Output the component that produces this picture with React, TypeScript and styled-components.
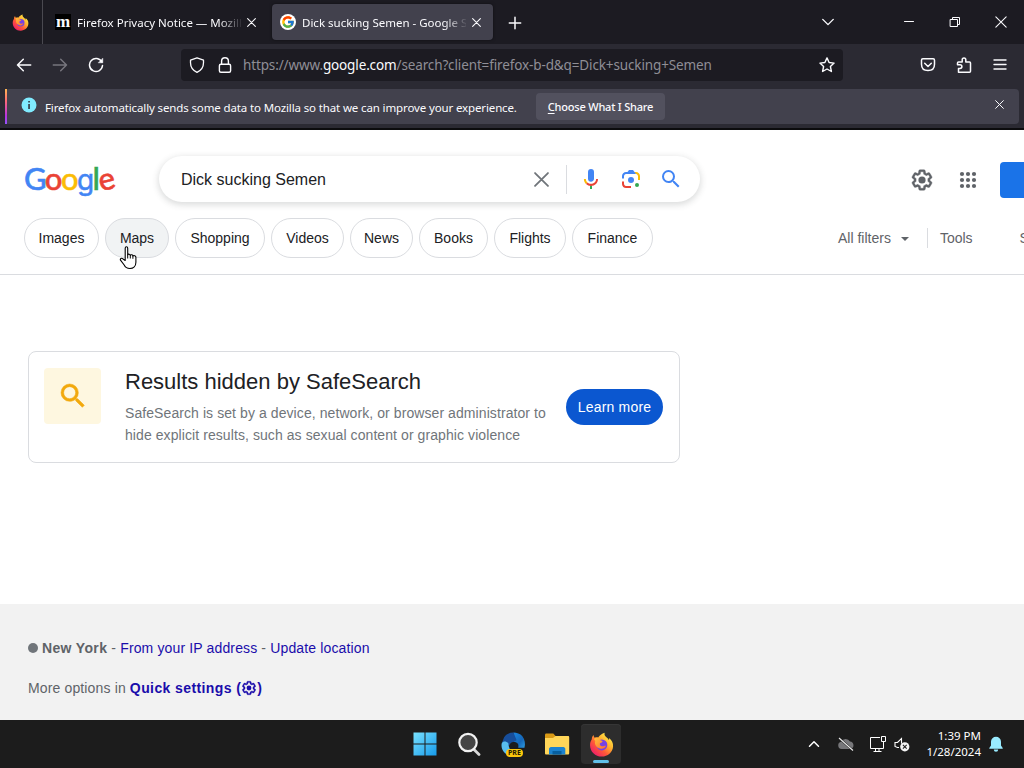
import { useState } from "react";
import type { ReactNode } from "react";
import styled, { createGlobalStyle, css } from "styled-components";
import { FcGoogle } from "react-icons/fc";

const GlobalStyle = createGlobalStyle`
  * { box-sizing: border-box; }
  html, body { margin: 0; padding: 0; overflow: hidden; }
  button { font: inherit; color: inherit; border: none; background: none; padding: 0; }
`;

const ui = `"Noto Sans", "Open Sans", sans-serif`;
const arial = `"Liberation Sans", Arial, sans-serif`;

/* ---------- icons ---------- */

const Stroke = ({
  size = 16,
  w = 1.4,
  color = "#fbfbfe",
  box = 16,
  children,
}: {
  size?: number;
  w?: number;
  color?: string;
  box?: number;
  children: ReactNode;
}) => (
  <svg
    width={size}
    height={size}
    viewBox={`0 0 ${box} ${box}`}
    fill="none"
    stroke={color}
    strokeWidth={w}
    strokeLinecap="round"
    strokeLinejoin="round"
  >
    {children}
  </svg>
);

const GEAR =
  "M13.85 22.25h-3.7c-.74 0-1.36-.54-1.45-1.27l-.27-1.89c-.27-.14-.53-.29-.79-.46l-1.8.72c-.7.26-1.47-.03-1.81-.65L2.2 15.53c-.35-.66-.2-1.44.36-1.88l1.53-1.19c-.01-.15-.02-.3-.02-.46 0-.15.01-.31.02-.46l-1.52-1.19c-.59-.45-.74-1.26-.37-1.88l1.85-3.19c.34-.62 1.11-.9 1.79-.63l1.81.73c.26-.17.52-.32.78-.46l.27-1.91c.09-.7.71-1.25 1.44-1.25h3.7c.74 0 1.36.54 1.45 1.27l.27 1.89c.27.14.53.29.79.46l1.8-.72c.71-.26 1.48.03 1.82.65l1.84 3.18c.36.66.2 1.44-.36 1.88l-1.52 1.19c.01.15.02.3.02.46s-.01.31-.02.46l1.52 1.19c.56.45.72 1.23.37 1.86l-1.86 3.22c-.34.62-1.11.9-1.8.63l-1.8-.72c-.26.17-.52.32-.78.46l-.27 1.91c-.1.68-.72 1.22-1.46 1.22zm-3.23-2h2.76l.37-2.55.53-.22c.44-.18.88-.44 1.34-.78l.45-.34 2.38.96 1.38-2.4-2.03-1.58.07-.56c.03-.26.06-.51.06-.78s-.03-.53-.06-.78l-.07-.56 2.03-1.58-1.39-2.4-2.39.96-.45-.35c-.42-.32-.87-.58-1.33-.77l-.52-.22-.37-2.55h-2.76l-.37 2.55-.53.21c-.44.19-.88.44-1.34.79l-.45.33-2.38-.95-1.39 2.39 2.03 1.58-.07.56a7 7 0 0 0-.06.79c0 .26.02.53.06.78l.07.56-2.03 1.58 1.38 2.4 2.39-.96.45.35c.43.33.86.58 1.33.77l.53.22.38 2.55z";

const Gear = ({ size, color }: { size: number; color: string }) => (
  <svg width={size} height={size} viewBox="0 0 24 24" fill={color}>
    <path d={GEAR} stroke={color} strokeWidth="0.4" />
    <circle cx="12" cy="12" r="3.6" />
  </svg>
);

const Magnifier = ({ size, color, bold = 0 }: { size: number; color: string; bold?: number }) => (
  <svg width={size} height={size} viewBox="0 0 24 24" fill={color} stroke={color} strokeWidth={bold}>
    <path d="M15.5 14h-.79l-.28-.27A6.47 6.47 0 0 0 16 9.5 6.5 6.5 0 1 0 9.5 16c1.61 0 3.09-.59 4.23-1.57l.27.28v.79l5 4.99L20.49 19l-4.99-5zm-6 0a4.5 4.5 0 1 1 0-9 4.5 4.5 0 0 1 0 9z" />
  </svg>
);

const FirefoxLogo = ({ size, id }: { size: number; id: string }) => (
  <svg width={size} height={size} viewBox="0 0 24 24">
    <defs>
      <linearGradient id={`${id}b`} x1="0.85" y1="0.1" x2="0.15" y2="0.9">
        <stop offset="0" stopColor="#fff04a" />
        <stop offset="0.35" stopColor="#ffb02e" />
        <stop offset="0.65" stopColor="#ff5838" />
        <stop offset="1" stopColor="#ee1f69" />
      </linearGradient>
      <linearGradient id={`${id}h`} x1="0" y1="0" x2="1" y2="1">
        <stop offset="0" stopColor="#ffc43a" />
        <stop offset="1" stopColor="#ff6a31" />
      </linearGradient>
    </defs>
    <path
      fill={`url(#${id}b)`}
      d="M15 .7c-.6 2.2.5 3.2 2 4.6 1 .9 1.8 1.7 2.2 2.7.2-.9.1-1.5-.1-2.2 2.9 2 4.2 5 4 8C22.7 19.500 18 23.500 12.200 23.500 6 23.500 1 18.800 1 12.600c0-2.500.8-4.300 1.700-5.700 0-1.500.5-2.900 1.600-4 .1 1 .5 1.800 1.100 2.500 1.200-.5 2.400-.5 3.400-.2C10.700 2.900 12.500 1.300 15 .7z"
    />
    <circle cx="12.300" cy="12.400" r="5.300" fill="#7542e5" />
    <path
      fill={`url(#${id}h)`}
      d="M4.700 6.600c1.500-1.300 3.500-1.400 5-.7l2.200.1c-.5.6-1.200 1-1.400 1.700l2.500.9c.1.900-.6 1.300-2.500 2.100-.4 1.400.4 2.700 2 3 1.600.2 2.500-.7 3.800-.5-.7 1.900-2.600 3.100-4.800 2.900-3.500-.3-5.800-2.900-5.800-5.700 0-.7.1-1.200.4-1.800z"
    />
  </svg>
);

const BackIcon = ({ dim }: { dim?: boolean }) => (
  <Stroke color={dim ? "#77767e" : "#fbfbfe"} w={1.5}>
    {dim ? <path d="M1.300 8h13.200M8.700 2.300 14.500 8l-5.800 5.700" /> : <path d="M14.700 8H1.500M7.300 2.300 1.500 8l5.800 5.700" />}
  </Stroke>
);

const Cross = ({ size, w = 1, color = "#fbfbfe" }: { size: number; w?: number; color?: string }) => (
  <Stroke size={size} box={10} w={w} color={color}>
    <path d="m.7.7 8.600 8.600M9.300.7.7 9.300" />
  </Stroke>
);

const MicIcon = () => (
  <svg width="24" height="24" viewBox="0 0 24 24">
    <path fill="#4285f4" d="M12 14.800c1.700 0 3-1.400 3-3V5.100a3 3 0 0 0-6 0v6.700c0 1.700 1.300 3 3 3z" />
    <path fill="#34a853" d="M11 18.200h2V22h-2z" />
    <path fill="#fbbc04" d="M7 16.900c-1.300-1.300-2.100-3-2.100-5h2c0 1.500.6 2.700 1.500 3.600z" />
    <path fill="#ea4335" d="M17.100 11.900c0 2.800-2.300 4.900-5.100 4.900-1.400 0-2.700-.5-3.600-1.400L7 16.900a7 7 0 0 0 5 2c3.900 0 7-3.100 7-7z" />
  </svg>
);

const LensIcon = () => (
  <svg width="24" height="24" viewBox="0 0 192 192">
    <circle fill="#34a853" cx="144.070" cy="144" r="16" />
    <circle fill="#4285f4" cx="96.070" cy="104" r="24" />
    <path fill="#ea4335" d="M24 135.200c0 18.110 14.690 32.800 32.800 32.800H96v-16l-40.100-.1c-8.800 0-15.900-8.190-15.900-17.900v-18H24v19.200z" />
    <path fill="#fbbc04" d="M168 72.800c0-18.110-14.690-32.800-32.800-32.800H116l20 16c8.800 0 16 8.290 16 18v30h16V72.800z" />
    <path fill="#4285f4" d="M112 24H80L68 40H56.800C38.690 40 24 54.690 24 72.800V92h16V74c0-9.710 7.200-18 16-18h80L124 40l-12-16z" />
  </svg>
);

/* ---------- browser chrome ---------- */

const Screen = styled.div`
  position: relative;
  width: 1024px;
  height: 768px;
  display: flex;
  flex-direction: column;
  overflow: hidden;
  background: #fff;
  font-family: ${arial};
  svg { display: block; flex: none; }
`;

const TabBar = styled.div`
  height: 44px;
  display: flex;
  align-items: center;
  background: #1c1b22;
  color: #fbfbfe;
  font: 11.5px/18px ${ui};
`;

const PinnedTab = styled.div`
  width: 43px;
  height: 44px;
  display: flex;
  align-items: center;
  padding-left: 12px;
  border-right: 1px solid #4a4950;
  margin-right: 4px;
`;

const Tab = styled.div<{ $active?: boolean }>`
  width: 221px;
  height: 36px;
  display: flex;
  align-items: center;
  padding: 0 12px 0 8px;
  margin-right: 4px;
  border-radius: 4px;
  ${(p) => p.$active && css`background: #42414d; box-shadow: 0 0 3px rgba(0, 0, 0, 0.5);`}
`;

const TabTitle = styled.span`
  width: 164px;
  margin: 1px 6px 0 6px;
  overflow: hidden;
  white-space: nowrap;
  mask-image: linear-gradient(to right, #000 142px, transparent 166px);
`;

const Favicon = styled.span`
  width: 16px;
  height: 16px;
  flex: none;
  display: grid;
  place-items: center;
  background: #000;
  font: bold 17px/10px "Liberation Serif", serif;
  padding-bottom: 1px;
`;

const RoundFavicon = styled.span`
  width: 16px;
  height: 16px;
  flex: none;
  display: grid;
  place-items: center;
  border-radius: 50%;
  background: #fff;
`;

const NewTab = styled.button`
  margin: 1px 0 0 11px;
`;

const WindowControls = styled.div`
  display: flex;
  align-items: center;
  margin-left: auto;
  padding-right: 17px;
  gap: 34px;
  & > :first-child { margin-right: 34px; }
`;

const NavBar = styled.div`
  height: 45px;
  display: flex;
  align-items: center;
  padding: 0 16px 4px;
  background: #2b2a33;
`;

const NavButtons = styled.div`
  display: flex;
  gap: 20px;
  width: 165px;
`;

const UrlBar = styled.div`
  width: 662px;
  height: 32px;
  display: flex;
  align-items: center;
  padding: 0 8px;
  border-radius: 4px;
  background: #1c1b22;
  gap: 12px;
`;

const Url = styled.span`
  flex: 1;
  margin: 1px 0 0 -2px;
  color: #8f8e96;
  font: 13.5px/20px ${ui};
  letter-spacing: -0.13px;
  white-space: nowrap;
  b { font-weight: 400; color: #fbfbfe; }
`;

const NavActions = styled.div`
  display: flex;
  align-items: center;
  gap: 20px;
  margin-left: auto;
`;

const NoticeWrap = styled.div`
  height: 41px;
  padding: 0 5px;
  background: #2b2a33;
  border-bottom: 2px solid #0c0c0e;
`;

const Notice = styled.div`
  height: 35px;
  display: flex;
  align-items: center;
  padding: 0 15px 0 14px;
  background: #42414d;
  border-left: 2px solid;
  border-image: linear-gradient(#ffbd4f, #ff6a75 35%, #b833e1 75%, #9059ff) 1;
  border-radius: 4px;
  color: #fbfbfe;
  font: 11.5px/18px ${ui};
  & > svg { margin-bottom: 4px; }
`;

const NoticeText = styled.span`
  margin: 2px 20px 0 8px;
  width: 471px;
  white-space: nowrap;
  letter-spacing: -0.13px;
`;

const NoticeButton = styled.button`
  width: 129px;
  height: 27px;
  margin-right: auto;
  border-radius: 4px;
  background: #52515e;
  font-size: 11px;
  font-weight: 500;
  letter-spacing: -0.2px;
  white-space: nowrap;
  u { text-underline-offset: 2px; }
`;

const BrowserChrome = () => (
  <>
    <TabBar>
      <PinnedTab>
        <FirefoxLogo size={17} id="pin" />
      </PinnedTab>
      <Tab>
        <Favicon>m</Favicon>
        <TabTitle>Firefox Privacy Notice — Mozilla</TabTitle>
        <Cross size={9} w={1.2} />
      </Tab>
      <Tab $active>
        <RoundFavicon>
          <FcGoogle size={14} />
        </RoundFavicon>
        <TabTitle>Dick sucking Semen - Google Search</TabTitle>
        <Cross size={9} w={1.2} />
      </Tab>
      <NewTab aria-label="New tab">
        <Stroke size={14} w={1.7}>
          <path d="M8 1.500v13M1.500 8h13" />
        </Stroke>
      </NewTab>
      <WindowControls>
        <Stroke size={14} w={1.6}>
          <path d="m2 5 6 6 6-6" />
        </Stroke>
        <Stroke size={12} box={12} w={1}>
          <path d="M1.500 5.500h9" />
        </Stroke>
        <Stroke size={12} box={12} w={1}>
          <path d="M1.500 3.500h7v7h-7zM3.500 3V1.500h7v7H9" />
        </Stroke>
        <Cross size={12} w={0.9} />
      </WindowControls>
    </TabBar>
    <NavBar>
      <NavButtons>
        <BackIcon />
        <BackIcon dim />
        <Stroke w={1.5}>
          <path d="M13.800 5A6.500 6.500 0 1 0 14.500 8.500" />
          <path d="M14.800 1.500v4.300h-4.300z" fill="#fbfbfe" strokeWidth={0.5} />
        </Stroke>
      </NavButtons>
      <UrlBar>
        <Stroke w={1.3}>
          <path d="M8 .8 14.500 3.200v2.500c0 4.500-2 7.500-6.500 9.600C3.500 13.200 1.500 10.200 1.500 5.700V3.200z" />
        </Stroke>
        <Stroke w={1.4}>
          <rect x="2.400" y="7.200" width="11.200" height="8" rx="1.500" />
          <path d="M4.600 7V4.200a3.400 3.400 0 0 1 6.800 0V7" />
        </Stroke>
        <Url>
          https://www.<b>google.com</b>/search?client=firefox-b-d&amp;q=Dick+sucking+Semen
        </Url>
        <Stroke w={1.4}>
          <path d="m8 .9 2.100 4.600 5 .6-3.700 3.400 1 5L8 12l-4.400 2.500 1-5L.9 6.100l5-.6z" />
        </Stroke>
      </UrlBar>
      <NavActions>
        <Stroke w={1.5}>
          <path d="M2.900 1.800h10.200c.8 0 1.400.6 1.400 1.400v4c0 4-2.700 6.300-6.500 6.300S1.500 11.200 1.500 7.200v-4c0-.8.6-1.400 1.400-1.400z" />
          <path d="m4.700 6.300 3.300 3.200 3.300-3.200" />
        </Stroke>
        <Stroke w={1.5}>
          <path d="M2.500 15.200V11.500H4a1.900 1.900 0 0 0 0-3.800H1.500V5.900c0-.6.4-1 1-1h3.700V2.700a1.800 1.800 0 0 1 3.600 0v2.200h3.700c.6 0 1 .4 1 1v8.300c0 .6-.4 1-1 1z" />
        </Stroke>
        <Stroke w={1.4}>
          <path d="M2 3h12M2 7.500h12M2 12h12" />
        </Stroke>
      </NavActions>
    </NavBar>
    <NoticeWrap>
      <Notice>
        <svg width="16" height="16" viewBox="0 0 16 16">
          <circle cx="8" cy="8" r="7.500" fill="#80ebff" />
          <path d="M7.300 7h1.500v5H7.300zM7.300 4h1.500v1.600H7.300z" fill="#2b2a33" />
        </svg>
        <NoticeText>
          Firefox automatically sends some data to Mozilla so that we can improve your experience.
        </NoticeText>
        <NoticeButton>
          <u>C</u>hoose What I Share
        </NoticeButton>
        <Cross size={9} w={1.1} />
      </Notice>
    </NoticeWrap>
  </>
);

/* ---------- search page ---------- */

const Header = styled.header`
  height: 145px;
  border-bottom: 1px solid #dadce0;
  overflow: hidden;
`;

const SearchRow = styled.div`
  display: flex;
  align-items: center;
  width: 1100px;
  height: 46px;
  margin-top: 26px;
  padding-left: 24px;
`;

const Wordmark = styled.div`
  width: 135px;
  height: 40px;
  font: 500 31px/39px Lato, sans-serif;
  letter-spacing: -1.6px;
  white-space: nowrap;
  -webkit-text-stroke: 0.5px;
`;

const Letter = styled.span<{ $color: string; $tilt?: boolean; $single?: boolean }>`
  color: ${(p) => p.$color};
  ${(p) => p.$single && css`font: 400 28px/1 Inter, sans-serif;`}
  ${(p) => p.$tilt && css`display: inline-block; transform: rotate(-14deg);`}
`;

const SearchBox = styled.div`
  width: 541px;
  height: 46px;
  display: flex;
  align-items: center;
  padding: 0 17px 0 22px;
  border-radius: 24px;
  background: #fff;
  box-shadow: 0 2px 6px 1px rgba(60, 64, 67, 0.18);
`;

const Query = styled.span`
  flex: 1;
  margin-top: 2px;
  font-size: 16px;
  color: #202124;
`;

const BoxDivider = styled.span`
  width: 1px;
  height: 29px;
  margin: 0 12px 0 17px;
  background: #dadce0;
`;

const BoxIcons = styled.div`
  display: flex;
  gap: 16px;
`;

const AccountArea = styled.div`
  display: flex;
  align-items: center;
  gap: 22px;
  margin-left: 210px;
  padding-top: 2px;
`;

const SignIn = styled.span`
  width: 96px;
  height: 36px;
  margin-left: -2px;
  border-radius: 4px;
  background: #1a73e8;
`;

const FilterRow = styled.div`
  display: flex;
  align-items: center;
  width: 1100px;
  height: 40px;
  margin-top: 16px;
  padding-left: 24px;
  font-size: 14px;
  gap: 6px;
`;

const Chip = styled.button<{ $w: number; $hover?: boolean }>`
  width: ${(p) => p.$w}px;
  height: 40px;
  border: 1px solid #dadce0;
  border-radius: 20px;
  background: ${(p) => (p.$hover ? "#f1f3f4" : "#fff")};
  color: #202124;
`;

const ToolLinks = styled.div`
  display: flex;
  align-items: center;
  margin-left: 179px;
  color: #5f6368;
  white-space: nowrap;
`;

const Caret = styled.span`
  margin: 1px 18px 0 10px;
  border: 4.5px solid transparent;
  border-top-color: #5f6368;
  border-bottom: 0;
`;

const ToolDivider = styled.span`
  width: 1px;
  height: 20px;
  margin-right: 12px;
  background: #dadce0;
`;

const SafeLabel = styled.span`
  margin-left: 47px;
`;

const Main = styled.main`
  height: 329px;
  padding: 76px 28px 0;
`;

const Card = styled.section`
  width: 652px;
  height: 112px;
  display: flex;
  padding: 16px 16px 16px 15px;
  border: 1px solid #dadce0;
  border-radius: 8px;
`;

const CardIcon = styled.div`
  width: 57px;
  height: 56px;
  display: grid;
  place-items: center;
  border-radius: 4px;
  background: #fef7e0;
`;

const CardBody = styled.div`
  width: 465px;
  padding-left: 24px;
  white-space: nowrap;
`;

const CardTitle = styled.h1`
  margin: 0 0 6px;
  font: 400 22px/28px ${arial};
  color: #202124;
`;

const CardText = styled.p`
  margin: 0;
  font-size: 14px;
  line-height: 22px;
  letter-spacing: 0.08px;
  color: #70757a;
`;

const LearnMore = styled.button`
  width: 97px;
  height: 36px;
  margin-top: 21px;
  border-radius: 18px;
  background: #0b57d0;
  color: #fff;
  font-size: 14px;
  letter-spacing: 0.2px;
`;

const Footer = styled.footer`
  height: 116px;
  padding: 34px 28px 0;
  background: #f2f2f2;
  color: #5f6368;
  font-size: 14px;
  line-height: 20px;
  letter-spacing: 0.14px;
`;

const FootLine = styled.div`
  display: flex;
  align-items: center;
  height: 20px;
  margin-bottom: 20px;
  white-space: pre;
  b { color: #5f6368; letter-spacing: 0.35px; }
`;

const Dot = styled.span`
  width: 10px;
  height: 10px;
  margin-right: 4px;
  border-radius: 50%;
  background: #70757a;
`;

const Link = styled.a<{ $bold?: boolean }>`
  display: inline-flex;
  align-items: center;
  color: #1a0dab;
  ${(p) => p.$bold && css`font-weight: 700; letter-spacing: 0.4px;`}
`;

const CHIPS: [string, number][] = [
  ["Images", 75],
  ["Maps", 64],
  ["Shopping", 90],
  ["Videos", 73],
  ["News", 63],
  ["Books", 69],
  ["Flights", 72],
  ["Finance", 81],
];

const SearchPage = () => {
  const [hovered, setHovered] = useState("Maps");
  return (
    <>
      <Header>
        <SearchRow>
          <Wordmark>
            <Letter $color="#4285f4">G</Letter>
            <Letter $color="#ea4335">o</Letter>
            <Letter $color="#fbbc05">o</Letter>
            <Letter $color="#4285f4" $single>g</Letter>
            <Letter $color="#34a853">l</Letter>
            <Letter $color="#ea4335" $tilt>e</Letter>
          </Wordmark>
          <SearchBox>
            <Query>Dick sucking Semen</Query>
            <Cross size={15} w={1.2} color="#70757a" />
            <BoxDivider />
            <BoxIcons>
              <MicIcon />
              <LensIcon />
              <Magnifier size={24} color="#4285f4" />
            </BoxIcons>
          </SearchBox>
          <AccountArea>
            <Gear size={24} color="#5f6368" />
            <svg width="24" height="24" viewBox="0 0 24 24" fill="#5f6368">
              {[6, 12, 18].map((y) => [6, 12, 18].map((x) => <circle key={`${x}-${y}`} cx={x} cy={y} r="2.1" />))}
            </svg>
            <SignIn />
          </AccountArea>
        </SearchRow>
        <FilterRow>
          {CHIPS.map(([label, w]) => (
            <Chip key={label} $w={w} $hover={hovered === label} onMouseEnter={() => setHovered(label)}>
              {label}
            </Chip>
          ))}
          <ToolLinks>
            All filters
            <Caret />
            <ToolDivider />
            Tools
            <SafeLabel>SafeSearch</SafeLabel>
          </ToolLinks>
        </FilterRow>
      </Header>
      <Main>
        <Card>
          <CardIcon>
            <Magnifier size={32} color="#f2a90d" bold={0.4} />
          </CardIcon>
          <CardBody>
            <CardTitle>Results hidden by SafeSearch</CardTitle>
            <CardText>
              SafeSearch is set by a device, network, or browser administrator to
              <br />
              hide explicit results, such as sexual content or graphic violence
            </CardText>
          </CardBody>
          <LearnMore>Learn more</LearnMore>
        </Card>
      </Main>
      <Footer>
        <FootLine>
          <Dot />
          <b>New York</b> - <Link>From your IP address</Link> - <Link>Update location</Link>
        </FootLine>
        <FootLine>
          More options in{" "}
          <Link $bold>
            Quick settings (<Gear size={16} color="#1a0dab" />)
          </Link>
        </FootLine>
      </Footer>
    </>
  );
};

/* ---------- taskbar ---------- */

const TaskbarRoot = styled.div`
  height: 48px;
  display: flex;
  align-items: center;
  background: #1c1c1c;
  color: #fff;
`;

const Apps = styled.div`
  display: flex;
  align-items: center;
  gap: 4px;
  margin-left: 405px;
`;

const AppButton = styled.div<{ $active?: boolean }>`
  position: relative;
  width: 40px;
  height: 40px;
  display: grid;
  place-items: center;
  border-radius: 4px;
  ${(p) =>
    p.$active &&
    css`
      background: #2d2d2d;
      box-shadow: inset 0 1px #363636;
      &::after {
        content: "";
        position: absolute;
        bottom: 1px;
        left: 12px;
        width: 16px;
        height: 3px;
        border-radius: 2px;
        background: #60bfe8;
      }
    `}
`;

const PreBadge = styled.span`
  position: absolute;
  left: 13px;
  bottom: 7px;
  padding: 0 2px;
  border-radius: 4px;
  background: #fdc70c;
  color: #231a00;
  font: bold 7px/8px ${ui};
`;

const Tray = styled.div`
  display: flex;
  align-items: center;
  margin-left: auto;
  padding-right: 20px;
`;

const TrayIcons = styled.div`
  display: flex;
  align-items: center;
  gap: 10px;
  margin-right: 15px;
  & > :nth-child(2) { margin-left: 7px; }
  & > :nth-child(3) { margin-left: 4px; }
  & > :nth-child(4) { margin-left: -3px; }
`;

const Clock = styled.div`
  width: 56px;
  margin-right: 7px;
  text-align: right;
  white-space: nowrap;
  font: 11.5px/16px ${ui};
  display: flex;
  flex-direction: column;
  align-items: flex-end;
`;

const Taskbar = () => (
  <TaskbarRoot>
    <Apps>
      <AppButton>
        <svg width="24" height="24" viewBox="0 0 24 24">
          <defs>
            <linearGradient id="win" x1="0" y1="0" x2="24" y2="24" gradientUnits="userSpaceOnUse">
              <stop offset="0" stopColor="#7be3ff" />
              <stop offset="1" stopColor="#1499ea" />
            </linearGradient>
          </defs>
          <path fill="url(#win)" d="M.5.5h11v11H.5zM12.500.5h11v11h-11zM.5 12.500h11v11H.5zM12.500 12.500h11v11h-11z" />
        </svg>
      </AppButton>
      <AppButton>
        <svg width="24" height="24" viewBox="0 0 24 24" fill="none">
          <path d="m17 17.500 5 5" stroke="#d8d8d8" strokeWidth="2.800" strokeLinecap="round" />
          <circle cx="11" cy="10.500" r="8.700" stroke="#f2f2f2" strokeWidth="2.200" fill="#454545" />
        </svg>
      </AppButton>
      <AppButton>
        <svg width="25" height="25" viewBox="0 0 24 24">
          <defs>
            <linearGradient id="cop" x1="0" y1="0" x2="1" y2="1">
              <stop offset="0" stopColor="#1a86e0" />
              <stop offset="0.6" stopColor="#1667b8" />
              <stop offset="1" stopColor="#2d9be0" />
            </linearGradient>
          </defs>
          <path fill="url(#cop)" d="M12 .5c3 0 6.500 1.200 8.500 3.500 2.300 3 3.200 7.500 2 11h-6c.8-3-.2-5.500-4.500-5.500z" />
          <path fill="#174e9b" d="M12 .5C8 .5 5 2 3 5L.8 10.500 8 13c.5-2 1.800-3.300 4-3.500l3-1.500z" />
          <path fill="#58bdf0" d="M.8 10.500C2 8.500 5 8.500 7 10.500c.5 4 1.500 7.500 4.500 9.500l-1 2.800C4 22.500-.8 17 .8 10.500z" />
        </svg>
        <PreBadge>PRE</PreBadge>
      </AppButton>
      <AppButton>
        <svg width="26" height="24" viewBox="0 0 26 24">
          <path fill="#d99a16" d="M1 3c0-.8.5-1.500 1.300-1.500h7L12 4.500V8H1z" />
          <path fill="#ffd659" d="M1 6h8l2.500-2H24c.7 0 1.200.5 1.200 1.200v16c0 .7-.5 1.300-1.200 1.300H2.200c-.7 0-1.200-.6-1.200-1.300z" />
          <path fill="#1b82cf" d="M5 22.500V17c0-1 .8-2 2-2h12.500c1 0 1.800 1 1.800 2v5.500z" />
          <path fill="#075f9f" d="M8.500 19h9v3.500h-9z" />
        </svg>
      </AppButton>
      <AppButton $active>
        <FirefoxLogo size={25} id="task" />
      </AppButton>
    </Apps>
    <Tray>
      <TrayIcons>
        <Stroke size={12} box={12} w={1.5} color="#fff">
          <path d="m1.500 8.300 4.500-4.500 4.500 4.500" />
        </Stroke>
        <svg width="18" height="16" viewBox="0 0 18 16">
          <path fill="#77777a" d="M4.500 13a3.700 3.700 0 0 1-.3-7.300A5 5 0 0 1 13 5.500 3.900 3.900 0 0 1 14 13z" />
          <path d="m2 2 14 12.500" stroke="#1c1c1c" strokeWidth="2.200" />
          <path d="m2 2 14 12.500" stroke="#eee" strokeWidth="1.100" />
        </svg>
        <svg width="18" height="18" viewBox="0 0 18 18" fill="none" stroke="#fff">
          <path d="M11 2.500H1.500v11h13V9M4.500 16.500h8M6.500 13.500v3M10 13.500v3" />
          <path d="M12.500 1.500h4v5h-4zM14.500 6.500v3" />
        </svg>
        <svg width="16" height="16" viewBox="0 0 16 16">
          <path d="M5 11.500H3.500L1 10.500v-4h2.500L7.500 2.500v5" fill="none" stroke="#fff" strokeWidth="1.100" />
          <circle cx="10.800" cy="10.800" r="4.600" fill="#f4f4f4" />
          <path d="m8.900 8.900 3.800 3.800M12.700 8.900l-3.800 3.800" stroke="#222" strokeWidth="1.100" />
        </svg>
      </TrayIcons>
      <Clock>
        <span>1:39 PM</span>
        <span>1/28/2024</span>
      </Clock>
      <svg width="16" height="16" viewBox="0 0 16 16" fill="#99ebff">
        <path d="M8 .7a5 5 0 0 1 5 5v3.800l1.700 2.500v.7H1.300V12L3 9.500V5.700a5 5 0 0 1 5-5zM5.800 13.500h4.400a2.200 2.200 0 0 1-4.400 0z" />
      </svg>
    </Tray>
  </TaskbarRoot>
);

const Pointer = styled.svg`
  position: absolute;
  left: 119px;
  top: 246px;
`;

const App = () => (
  <>
    <GlobalStyle />
    <Screen>
      <BrowserChrome />
      <SearchPage />
      <Taskbar />
      <Pointer width="19" height="24" viewBox="0 0 19 24">
        <path
          d="M6.200 14.500V2.300c0-2 2.500-2 2.500 0v6.500c.5-1 2.500-.8 2.600.5.6-1 2.500-.6 2.600.7.8-.8 3-.5 3 1.300v5c0 3.700-2.500 6.200-6 6.200-3 0-4.500-1-5.700-3.500L1.500 14.200c-.7-1.500 1-2.600 2.200-1.500z"
          fill="#fff"
          stroke="#000"
          strokeWidth="1.100"
          strokeLinejoin="round"
        />
        <path d="M8.700 8.500v4M11.300 9v3.500M13.900 9.800v3" stroke="#000" strokeWidth="1" />
      </Pointer>
    </Screen>
  </>
);

export default App;
